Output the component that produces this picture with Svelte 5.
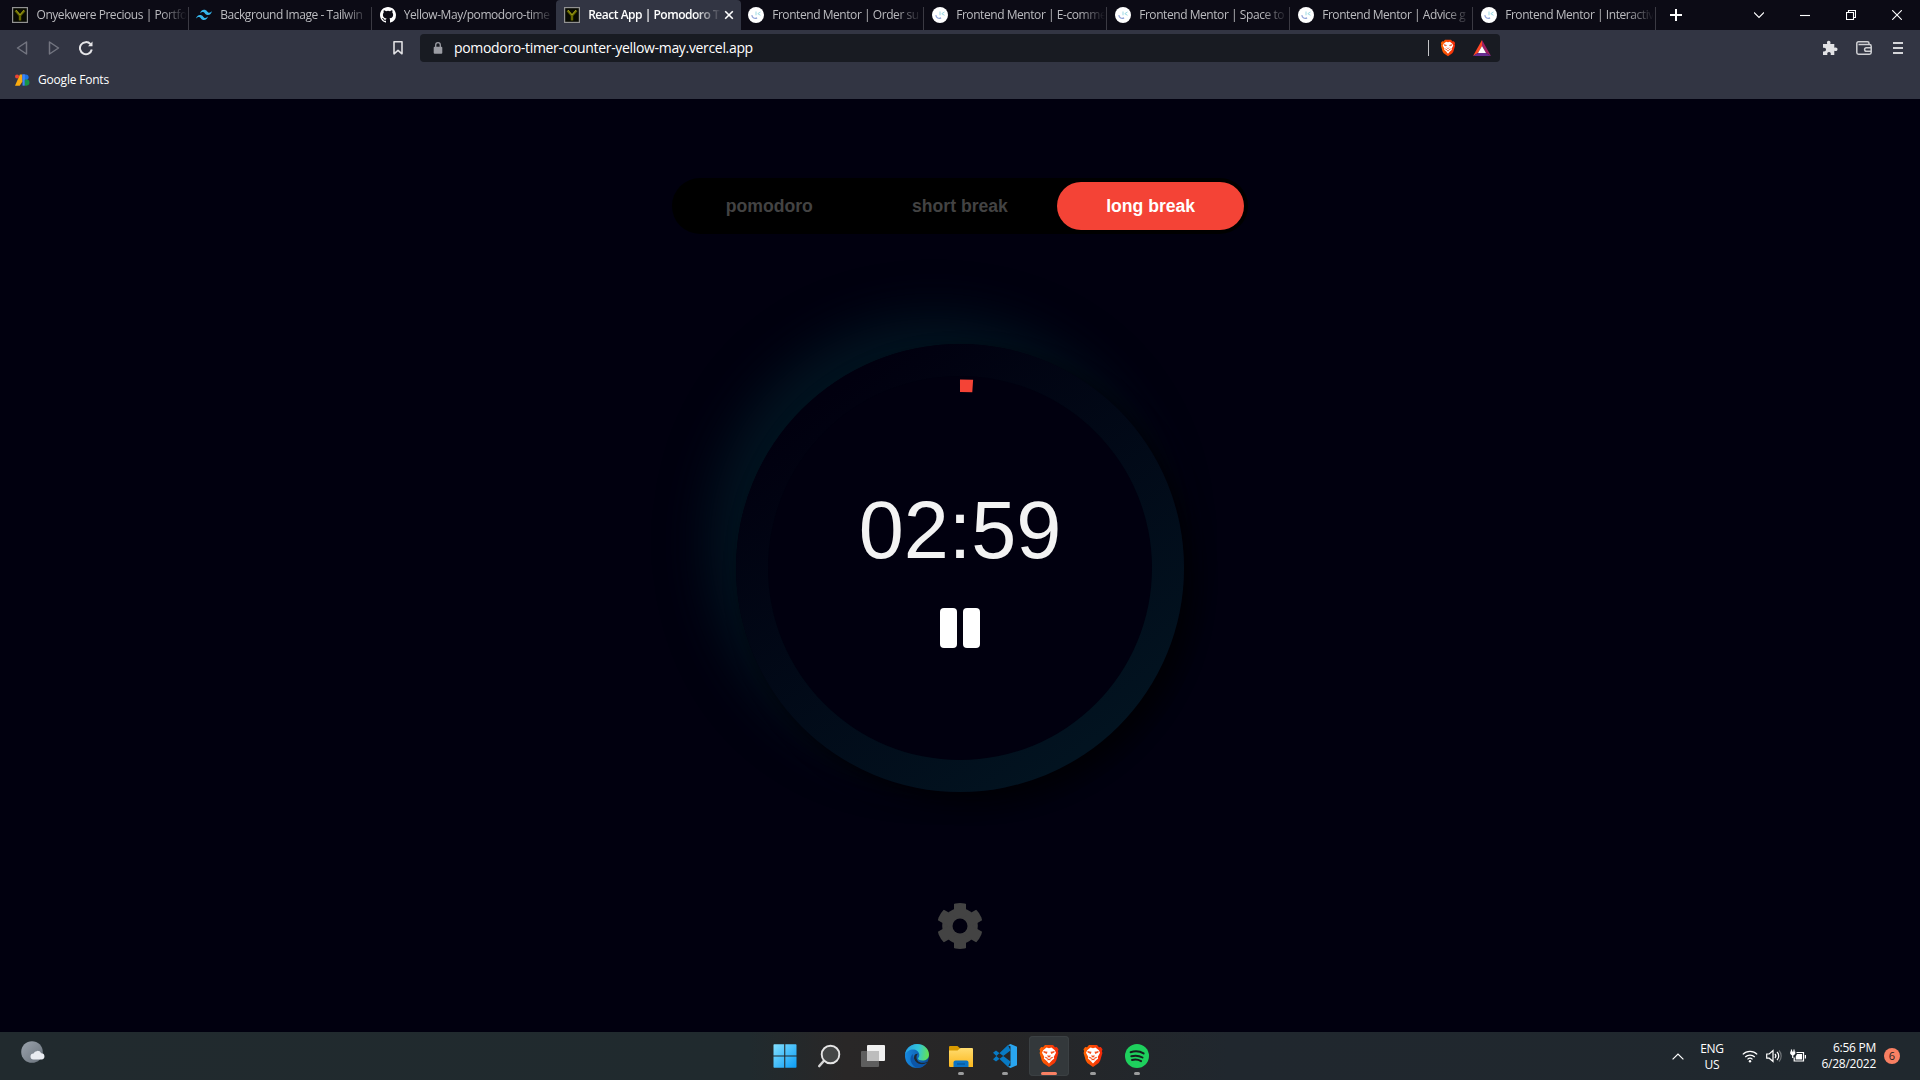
<script>
  const tabs = [
    { icon: 'y', title: 'Onyekwere Precious | Portfo' },
    { icon: 'tw', title: 'Background Image - Tailwin' },
    { icon: 'gh', title: 'Yellow-May/pomodoro-time' },
    { icon: 'y', title: 'React App | Pomodoro T', active: true },
    { icon: 'fm', title: 'Frontend Mentor | Order su' },
    { icon: 'fm', title: 'Frontend Mentor | E-comme' },
    { icon: 'fm', title: 'Frontend Mentor | Space to' },
    { icon: 'fm', title: 'Frontend Mentor | Advice g' },
    { icon: 'fm', title: 'Frontend Mentor | Interactiv' }
  ];
  const modes = ['pomodoro', 'short break', 'long break'];
  let mode = $state('long break');
  const apps = [
    { id: 'start' }, { id: 'search' }, { id: 'views' }, { id: 'edge' },
    { id: 'files', open: true }, { id: 'code', open: true },
    { id: 'brave', open: true, active: true }, { id: 'brave', open: true }, { id: 'spotify', open: true }
  ];
</script>

{#snippet lion()}
  <path d="M6 1h8l2 2.2 1.8-.2 1.7 2.2-.6 2 .5 1.8-2.2 7.6-1.5 2.4L10 23l-5.700-4-1.500-2.400L.6 9l.5-1.800-.6-2L2.200 3 4 3.200z" fill="url(#braveFill)" />
  <path d="M10 4.200l2.500-.6 3.300 2.600 1.200 2.500-2.300 4.200.5 1.500-2.400 2L10 19.500l-2.800-3.100-2.400-2 .5-1.500L3 8.700l1.200-2.500 3.300-2.600z" fill="#fff" />
  <path d="M4.600 7.800l3.200.5-.4 1zM15.400 7.800l-3.200.5.4 1zM8.600 11.500L10 13l1.400-1.500M6.300 13.200l2.500 1.300M13.700 13.200l-2.500 1.300M8.500 16l1.500-.8 1.500.8" stroke="#f4511e" stroke-width="1.100" fill="none" />
{/snippet}

<svg class="defs" width="0" height="0" aria-hidden="true">
  <linearGradient id="braveFill"><stop stop-color="#ff6500" /><stop offset="1" stop-color="#f4280a" /></linearGradient>
  <linearGradient id="winFill" x2="1" y2="1"><stop stop-color="#83e0ff" /><stop offset="1" stop-color="#0a9cf5" /></linearGradient>
  <linearGradient id="edgeTop" x1="0" y1=".4" x2="1" y2=".5"><stop stop-color="#279fe4" /><stop offset=".55" stop-color="#32c5d8" /><stop offset="1" stop-color="#64e34d" /></linearGradient>
  <linearGradient id="edgeLow" x2="1"><stop stop-color="#1688df" /><stop offset="1" stop-color="#0b4a97" /></linearGradient>
  <linearGradient id="folder" x2="0" y2="1"><stop stop-color="#ffdc70" /><stop offset="1" stop-color="#fcb81d" /></linearGradient>
  <linearGradient id="moon" x2="1" y2="1"><stop stop-color="#9ba3ad" /><stop offset="1" stop-color="#69727b" /></linearGradient>
</svg>

<div class="screen">
  <header>
    <div class="tabstrip">
      {#each tabs as tab}
        <div class="tab" class:active={tab.active}>
          <svg class="fav" viewBox="0 0 16 16">
            {#if tab.icon === 'y'}
              <rect x=".6" y=".6" width="14.800" height="14.800" fill="#080a02" stroke="#929292" stroke-width="1.200" />
              <path d="M3.500 3.500l4.500 5v5M12.500 3.500L8 8.500" stroke="#666800" stroke-width="2.400" fill="none" />
              <path d="M4 3l4 5 4-5" stroke="#a7a41d" stroke-width=".8" fill="none" />
            {:else if tab.icon === 'tw'}
              <path d="M4 6.400Q5 2.800 8 2.800c3 0 3.300 2.700 4.800 2.900 1.200.2 2.200-.5 3.200-1.700Q15 8 12 8C9 8 8.700 5.300 7.200 5 6 4.800 5 5.400 4 6.400zM0 11.600Q1 8 4 8c3 0 3.300 2.700 4.800 2.900 1.200.2 2.200-.5 3.200-1.700Q11 13 8 13c-3 0-3.300-2.700-4.800-3C2 9.800 1 10.400 0 11.600z" fill="#35b6ec" />
            {:else if tab.icon === 'gh'}
              <path fill="#fff" d="M8 0C3.580 0 0 3.580 0 8c0 3.540 2.290 6.530 5.470 7.590.4.070.55-.17.55-.38 0-.19-.01-.82-.01-1.490-2.010.37-2.530-.49-2.690-.94-.09-.23-.48-.94-.82-1.130-.28-.15-.68-.52-.01-.53.63-.01 1.080.58 1.230.82.72 1.210 1.870.87 2.330.66.070-.52.28-.87.51-1.070-1.780-.2-3.640-.89-3.640-3.950 0-.87.31-1.590.82-2.150-.08-.2-.36-1.020.08-2.120 0 0 .67-.21 2.200.82a7.600 7.600 0 0 1 4 0c1.530-1.040 2.200-.82 2.200-.82.44 1.100.16 1.920.08 2.120.51.56.82 1.270.82 2.150 0 3.070-1.870 3.750-3.650 3.950.29.25.54.73.54 1.480 0 1.070-.01 1.930-.01 2.200 0 .21.15.46.55.38A8 8 0 0 0 16 8c0-4.420-3.580-8-8-8z" />
            {:else}
              <circle cx="8" cy="8" r="8" fill="#fff" />
              <path d="M3.800 8.200c.4 2.500 2.800 3.900 5.300 2.700" stroke="#8fa2d8" stroke-width="1.200" fill="none" />
              <path d="M8 4.500v3.800M12.500 5L9.800 6.700l2.700 1.600" stroke="#9cd9e4" stroke-width="1" fill="none" />
            {/if}
          </svg>
          <span class="title">{tab.title}</span>
          {#if tab.active}
            <svg class="x" viewBox="0 0 10 10"><path d="M1.200 1.200l7.600 7.600M8.800 1.200L1.200 8.800" /></svg>
          {/if}
        </div>
      {/each}
      <svg class="plus" viewBox="0 0 12 12"><path d="M6 0v12M0 6h12" /></svg>
      <div class="window">
        <svg viewBox="0 0 10 10"><path d="M0 2.500l5 5 5-5" /></svg>
        <svg viewBox="0 0 10 10"><path d="M0 5.500h10" /></svg>
        <svg viewBox="0 0 10 10"><path d="M.5 2.500h7v7h-7zM2.500 2.500v-2h7v7h-2" /></svg>
        <svg viewBox="0 0 10 10"><path d="M.2.2l9.600 9.600M9.800.2L.2 9.800" /></svg>
      </div>
    </div>
    <div class="toolbar">
      <div class="nav">
        <svg class="dim" viewBox="0 0 14 16"><path d="M11.500 2v12L2.500 8z" /></svg>
        <svg class="dim" viewBox="0 0 14 16"><path d="M2.500 2v12l9-6z" /></svg>
        <svg viewBox="0 0 14 16"><path d="M11.500 4.200A6 6 0 1 0 12.800 9.500" stroke-width="2" /><path d="M9 6.300h4.500V1.500z" fill="#e5e5e8" stroke="none" /></svg>
      </div>
      <svg class="bookmark" viewBox="0 0 12 16"><path d="M2 1.800h8v12l-4-3.500-4 3.500z" /></svg>
      <div class="url">
        <svg class="lock" viewBox="0 0 10 12"><rect x=".7" y="4.800" width="8.600" height="7" rx="1" fill="#9b9da4" /><path d="M2.700 5V3a2.300 2.300 0 0 1 4.600 0v2" fill="none" stroke="#9b9da4" stroke-width="1.300" /></svg>
        <span class="address">pomodoro-timer-counter-yellow-may.vercel.app</span>
        <i></i>
        <svg class="shield" viewBox="0 0 20 24">{@render lion()}</svg>
        <svg class="bat" viewBox="0 0 18 16"><path d="M9 0L0 16l5-3L9 6z" fill="#ff4724" /><path d="M9 0l9 16-5-3L9 6z" fill="#9e1f63" /><path d="M0 16h18l-5-3H5z" fill="#662d91" /><path d="M9 6l4 7H5z" fill="#fff" /></svg>
      </div>
      <div class="tools">
        <svg viewBox="0 0 16 16"><path d="M1 4h4.200C4.500 2 5.400.8 6.700.8S9 2 8.300 4h4v3.800c2-.7 3.200.1 3.200 1.500s-1.200 2.300-3.200 1.500V15H8.700c.5-1.800-.4-2.900-1.700-2.900S4.800 13.200 5.400 15H1v-3.600c2 .4 3-.5 3-1.900S3 7.300 1 7.800z" fill="#e2e2e5" /></svg>
        <svg viewBox="0 0 16 16"><path d="M13 4.500V3.300q0-1.500-1.500-1.500h-9Q.8 1.800.8 3.500v9q0 1.700 1.700 1.700h11q1.700 0 1.700-1.700V6.200q0-1.700-1.700-1.700H2.500M15 7.700h-4.600a1.800 1.800 0 0 0 0 3.600H15" fill="none" stroke="#cfd0d4" stroke-width="1.500" /></svg>
        <svg viewBox="0 0 16 16"><path d="M3 3h10M3 8h10M3 13h10" stroke="#d4d5d8" stroke-width="1.800" /></svg>
      </div>
    </div>
    <div class="bookmarks">
      <svg viewBox="0 0 16 12"><path d="M5.200 0H8v7.500L5 12H0z" fill="#fbab0e" /><circle cx="2.200" cy="2.200" r="2.200" fill="#ea4335" /><path d="M8 0h3.500a3 3 0 0 1 0 6H8z" fill="#1a73e8" /><path d="M8 0h2.500v12H8z" fill="#4285f4" /><path d="M10.500 5.500h1.700a3.200 3.200 0 0 1 0 6.500h-1.700z" fill="#169447" /></svg>
      <span>Google Fonts</span>
    </div>
  </header>

  <main>
    <div class="modes">
      {#each modes as m}
        <button class:on={m === mode} onclick={() => (mode = m)}>{m}</button>
      {/each}
    </div>
    <div class="dial">
      <div class="face">
        <svg class="progress" viewBox="0 0 384 384"><path d="M192 9.700a182.300 182.300 0 0 1 12.700.4" /></svg>
        <time>02:59</time>
        <div class="pause"><b></b><b></b></div>
      </div>
    </div>
    <svg class="gear" viewBox="-24 -24 48 48">
      <clipPath id="gearClip"><circle r="23" /></clipPath>
      <mask id="gearHole"><rect x="-24" y="-24" width="48" height="48" fill="#fff" /><circle r="7.500" fill="#000" /></mask>
      <g mask="url(#gearHole)" fill="#434343"><g clip-path="url(#gearClip)">
        <circle r="17.800" />
        {#each [0, 60, 120] as a}
          <rect x="-6" y="-24" width="12" height="48" transform="rotate({a})" />
        {/each}
      </g></g>
    </svg>
  </main>

  <footer>
    <svg class="weather" viewBox="0 0 24 24"><circle cx="11" cy="11" r="10.800" fill="url(#moon)" /><path d="M12.500 18.500a3 3 0 0 1 0-6 4.200 4.200 0 0 1 7.700-.2 3.100 3.100 0 0 1 .3 6.200z" fill="#e9ecf1" /></svg>
    <div class="apps">
      {#each apps as app}
        <div class="app" class:open={app.open} class:current={app.active}>
          <svg viewBox="0 0 24 24">
            {#if app.id === 'start'}
              <path d="M.5 1a.8.8 0 0 1 .8-.8h9.900v11.200H.5zM12.300.2h10.400a.8.8 0 0 1 .8.8v10.400H12.300zM.5 12.500h10.700v11.300H1.300a.8.8 0 0 1-.8-.8zM12.300 12.500h11.200V23a.8.8 0 0 1-.8.8H12.300z" fill="url(#winFill)" />
            {:else if app.id === 'search'}
              <path d="M7.600 16L2.300 22" stroke="#d5d5d5" stroke-width="2.600" stroke-linecap="round" /><circle cx="13.500" cy="10.500" r="8.800" fill="#454747" stroke="#e5e5e5" stroke-width="1.900" />
            {:else if app.id === 'views'}
              <rect x="0" y="7" width="18" height="16" rx="1" fill="#5e5e5e" /><rect x="6" y="1" width="18" height="16" rx="1" fill="#f0f0f0" /><path d="M6 7h12v10H7a1 1 0 0 1-1-1z" fill="#bdbdbd" />
            {:else if app.id === 'edge'}
              <circle cx="12" cy="12" r="12" fill="url(#edgeLow)" />
              <path d="M0 11C.4 5 5.500 0 12 0c7 0 12 5 12 10.500 0 4-3 6-6.500 6-2.500 0-4.500-1-4.500-2 0-.6 1.300-1.300 1.300-3.500C14.300 7.500 11 5.500 8 5.500S1 7.500 0 11z" fill="url(#edgeTop)" />
              <path d="M9.200 12c-1.200 5 3 9.500 8.500 8.700 2-.3 3.800-1.600 4.500-2.300.4-.4.200-.8-.4-.5-4 1.900-10.300.9-10.300-4.900 0-1.600.7-2.700 1.700-3.300-1.800-.3-3.500.6-4 2.300z" fill="#1e2932" />
              <path d="M8 10c-4 3-3.500 10 3.500 13.800 4 .3 8-1.800 10.400-5-3.900 2.900-13.500 2-13.900-8.800z" fill="#0c55a7" />
            {:else if app.id === 'files'}
              <path d="M0 3a1 1 0 0 1 1-1h7.500L11 4.200V8H0z" fill="#d99a00" /><path d="M0 6.500h8.500l3-2.500H23a1 1 0 0 1 1 1v18H1a1 1 0 0 1-1-1z" fill="url(#folder)" /><path d="M4.500 23v-4.500a2 2 0 0 1 2-2h11a2 2 0 0 1 2 2V23z" fill="#0b73c5" /><path d="M8 20h8" stroke="#064f8d" />
            {:else if app.id === 'code'}
              <path d="M17.500 17.500L3 6.500 0 8.700l15 14.300zM17.500 6.500L3 17.500l-3-2.200L15 1z" fill="#087ac4" /><path d="M17.500 0L24 2.800v18.400L17.500 24l-2.700-1.200 2.700-1V2.200l-2.700-1z" fill="#29a5ef" />
            {:else if app.id === 'brave'}
              <g transform="translate(2 0)">{@render lion()}</g>
            {:else}
              <circle cx="12" cy="12" r="12" fill="#1ed05d" /><path d="M5.600 8.200c4.800-1.500 9.300-1 13 1.200M6.300 12.300c4-1.200 7.800-.7 11.200 1.200M7 16c3.500-1 6.200-.6 9.100 1.100" fill="none" stroke="#161e1d" stroke-width="2" stroke-linecap="round" />
            {/if}
          </svg>
        </div>
      {/each}
    </div>
    <div class="tray">
      <svg class="caret" viewBox="0 0 12 7"><path d="M.6 6.400L6 1l5.400 5.400" /></svg>
      <div class="lang"><span>ENG</span><span>US</span></div>
      <div class="status">
        <svg viewBox="0 0 16 14"><path d="M.8 5.400a10.200 10.200 0 0 1 14.400 0M3.200 8a6.900 6.900 0 0 1 9.600 0M5.500 10.400a3.600 3.600 0 0 1 5 0" /><circle cx="8" cy="12.200" r="1.200" fill="#fff" stroke="none" /></svg>
        <svg viewBox="0 0 16 14"><path d="M.7 5v4.200h2.500L7 12.500v-11L3.200 5zM9 5a3 3 0 0 1 0 4M11 3a5.500 5.500 0 0 1 0 8" /><path d="M13 1.500a8 8 0 0 1 0 11" opacity=".35" /></svg>
        <svg viewBox="0 0 16 14"><path d="M6.500 3.500h7v8.500H4.200V8.500M15.400 6v3.500M1.500.5v2.500M4 .5v2.500M2.700 5.500V9" /><path d="M.2 2.500h5.100v2.200L3.900 6.200H1.600L.2 4.700zM7 5h5v5.500H5.700V7.500z" fill="#fff" stroke="none" /></svg>
      </div>
      <div class="clock"><span>6:56 PM</span><span>6/28/2022</span></div>
      <span class="badge">6</span>
    </div>
  </footer>
</div>

<style>
  :global(body) { background: #01000f; overflow: hidden; }
  .defs { position: absolute; }
  svg { display: block; flex: none; }
  .screen { width: 1920px; height: 1080px; display: flex; flex-direction: column; background: #01000f; font-family: "Open Sans", "Noto Sans", sans-serif; color: #fff; }
  header { height: 99px; background: #323543; }

  .tabstrip { height: 30px; background: #0c0b15; display: flex; align-items: center; padding-left: 5px; box-sizing: border-box; }
  .tab { position: relative; width: 183px; height: 30px; box-sizing: border-box; display: flex; align-items: center; padding: 0 2px 0 8px; flex: none; }
  .tab:nth-child(-n+3) { width: 183.670px; padding-left: 7.300px; }
  .tab::after { content: ""; position: absolute; right: 0; top: 7px; width: 1px; height: 23px; background: #3b3a43; }
  .tab:nth-child(3)::after, .tab.active::after { display: none; }
  .tab.active { width: 185px; background: #323543; border-radius: 4px 4px 0 0; padding: 0 4px 0 8px; }
  .tab.active + .tab { padding-left: 7px; }
  .fav { width: 16px; height: 16px; margin-right: 8.200px; }
  .title { flex: 1; min-width: 0; white-space: nowrap; font-size: 12px; line-height: 18px; letter-spacing: -0.440px; color: #bcbcc0; mask-image: linear-gradient(90deg, #000 calc(100% - 26px), transparent); }
  .active .title { color: #fff; font-weight: 600; letter-spacing: -0.480px; }
  .x { width: 10px; height: 10px; margin: 0 3px 0 3px; fill: none; stroke: #fff; stroke-width: 1.600; }
  .plus { width: 12px; height: 12px; margin-left: 14px; stroke: #fff; stroke-width: 2; }
  .window { margin-left: auto; margin-right: 18px; display: flex; gap: 36px; }
  .window svg { width: 10px; height: 10px; fill: none; stroke: #fff; stroke-width: 1.100; }

  .toolbar { height: 36px; display: flex; align-items: center; padding-left: 15px; }
  .nav { display: flex; gap: 18px; width: 377px; }
  .nav svg { width: 14px; height: 16px; fill: none; stroke: #e5e5e8; stroke-width: 1.500; stroke-linejoin: round; }
  .nav .dim { stroke: #737580; }
  .bookmark { width: 12px; height: 16px; fill: none; stroke: #e0e0e3; stroke-width: 1.600; stroke-linejoin: round; }
  .url { width: 1080px; height: 28px; margin-left: 16px; background: #181b22; border-radius: 4px; display: flex; align-items: center; padding: 0 9px 0 13px; box-sizing: border-box; }
  .lock { width: 10px; height: 12px; }
  .address { margin-left: 11px; font-size: 14px; line-height: 20px; letter-spacing: -0.330px; }
  .url i { width: 1px; height: 16px; background: #c4c5c8; margin-left: auto; }
  .shield { width: 16px; height: 18px; margin: 0 17px 0 11px; }
  .bat { width: 18px; height: 16px; }
  .tools { margin-left: auto; margin-right: 14px; display: flex; gap: 18px; }
  .tools svg { width: 16px; height: 16px; }
  .bookmarks { height: 28px; display: flex; align-items: center; padding-left: 15px; gap: 8px; }
  .bookmarks svg { width: 15px; height: 12px; }
  .bookmarks span { font-size: 12px; line-height: 18px; letter-spacing: -0.200px; }

  main { flex: 1; display: flex; flex-direction: column; align-items: center; font-family: "Liberation Sans", Arial, sans-serif; }
  .modes { margin-top: 79px; width: 576px; height: 56px; padding: 4px; box-sizing: border-box; display: grid; grid-template-columns: repeat(3, 1fr); gap: 4px; background: #000; border-radius: 28px; }
  .modes button { border: 0; border-radius: 24px; background: none; color: #434343; font: bold 17.600px "Liberation Sans", Arial, sans-serif; padding: 0; }
  .modes .on { background: #f44336; color: #fff; }
  .dial { margin-top: 110px; width: 448px; height: 448px; padding: 32px; box-sizing: border-box; border-radius: 50%; background: linear-gradient(145deg, #01000f 15%, #021320 85%); box-shadow: 10px 10px 20px #000005, -26px -26px 50px #021421; }
  .face { position: relative; width: 384px; height: 384px; border-radius: 50%; background: #01000f; display: flex; flex-direction: column; align-items: center; }
  .progress { position: absolute; inset: 0; fill: none; stroke: #f44336; stroke-width: 12.500; }
  time { margin-top: 107px; font-size: 81px; line-height: 94px; color: #f3f3f3; }
  .pause { margin-top: 31px; display: flex; gap: 6px; }
  .pause b { width: 17px; height: 40px; background: #fff; border-radius: 4px; }
  .gear { width: 48px; height: 48px; margin-top: 110px; }

  footer { height: 48px; display: grid; grid-template-columns: 1fr auto 1fr; background: linear-gradient(90deg, #212a2e 0%, #202a2e 39%, #292727 44%, #262627 52%, #20272e 64%, #20282e 100%); }
  .weather { width: 24px; height: 24px; margin: 9px 0 0 21px; }
  .apps { display: flex; align-items: center; gap: 4px; padding-left: 2px; }
  .app { position: relative; width: 40px; height: 40px; display: grid; place-items: center; border-radius: 4px; }
  .app svg { width: 24px; height: 24px; }
  .app.open::after { content: ""; position: absolute; bottom: 1px; left: 17px; width: 6px; height: 3px; border-radius: 2px; background: #9b9c9d; }
  .app.current { background: #33383b; box-shadow: inset 0 0 0 1px #3b4043; }
  .app.current::after { left: 12px; width: 16px; background: #f98063; }
  .tray { display: flex; align-items: center; justify-content: flex-end; padding-right: 20px; font-size: 12px; line-height: 16px; }
  .caret { width: 12px; height: 7px; fill: none; stroke: #fff; stroke-width: 1.200; }
  .lang { width: 24px; margin-left: 16px; display: flex; flex-direction: column; align-items: center; letter-spacing: -0.250px; padding-top: 1px; }
  .status { margin-left: 18px; display: flex; gap: 8px; }
  .status svg { width: 16px; height: 14px; fill: none; stroke: #fff; stroke-width: 1.200; }
  .clock { width: 70px; display: flex; flex-direction: column; align-items: flex-end; letter-spacing: -0.250px; }
  .badge { width: 16px; height: 16px; margin-left: 8px; border-radius: 50%; background: #f98063; color: #222; font-size: 11px; text-align: center; }
</style>
